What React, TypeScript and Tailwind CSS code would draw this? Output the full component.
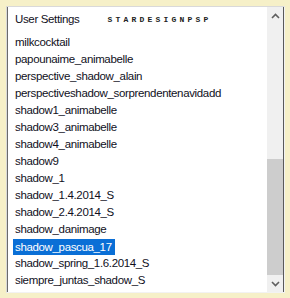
const items = [
  "milkcocktail",
  "papounaime_animabelle",
  "perspective_shadow_alain",
  "perspectiveshadow_sorprendentenavidadd",
  "shadow1_animabelle",
  "shadow3_animabelle",
  "shadow4_animabelle",
  "shadow9",
  "shadow_1",
  "shadow_1.4.2014_S",
  "shadow_2.4.2014_S",
  "shadow_danimage",
  "shadow_pascua_17",
  "shadow_spring_1.6.2014_S",
  "siempre_juntas_shadow_S",
];

const selected = "shadow_pascua_17";

export default function App() {
  return (
    <div className="w-[290px] h-[298px] bg-[#f6f0c8] pt-[6px] pl-[6px] font-['Liberation_Sans',Arial,sans-serif]">
      <div className="w-[279px] h-[287px] flex border-l border-l-[#d9d9d9] border-t border-t-[#d9d9d9] border-r border-r-[#f2f2f2] border-b border-b-[#f2f2f2]">
        <div className="flex-1 flex bg-white border-l border-l-[#6a6a6a]">
          {/* list */}
          <div className="flex-1 pt-[4px] pl-[5px] overflow-hidden">
            <div className="h-[18px] flex items-center mb-[5px]">
              <span className="px-[2px] text-[11.5px] tracking-[-0.35px] text-[#10101c]">User Settings</span>
              <span className="ml-[26px] text-[8px] font-bold tracking-[3.2px] text-[#222] font-['Liberation_Mono',monospace]">
                STARDESIGNPSP
              </span>
            </div>
            {items.map((name) => (
              <div key={name} className="h-[17px] flex items-center">
                <span
                  className={
                    name === selected
                      ? "h-[16px] leading-[16px] px-[2px] pr-[3px] text-[11.5px] tracking-[-0.35px] whitespace-nowrap bg-[#0a6fd6] text-white"
                      : "px-[2px] text-[11.5px] tracking-[-0.35px] whitespace-nowrap text-[#10101c]"
                  }
                >
                  {name}
                </span>
              </div>
            ))}
          </div>
          {/* scrollbar */}
          <div className="w-[16px] bg-[#f0f0f0] flex flex-col">
            <div className="h-[17px] flex items-center justify-center">
              <svg width="9" height="6" viewBox="0 0 9 6">
                <path d="M1 5 L4.5 1.5 L8 5" fill="none" stroke="#5f5f5f" strokeWidth="1.6" />
              </svg>
            </div>
            <div className="flex-1 flex flex-col">
              <div className="h-[135px]" />
              <div className="flex-1 bg-[#cdcdcd]" />
            </div>
            <div className="h-[17px] flex items-center justify-center">
              <svg width="9" height="6" viewBox="0 0 9 6">
                <path d="M1 1 L4.5 4.5 L8 1" fill="none" stroke="#5f5f5f" strokeWidth="1.6" />
              </svg>
            </div>
          </div>
          <div className="w-[1px] bg-[#5a5a5a]" />
        </div>
      </div>
    </div>
  );
}
